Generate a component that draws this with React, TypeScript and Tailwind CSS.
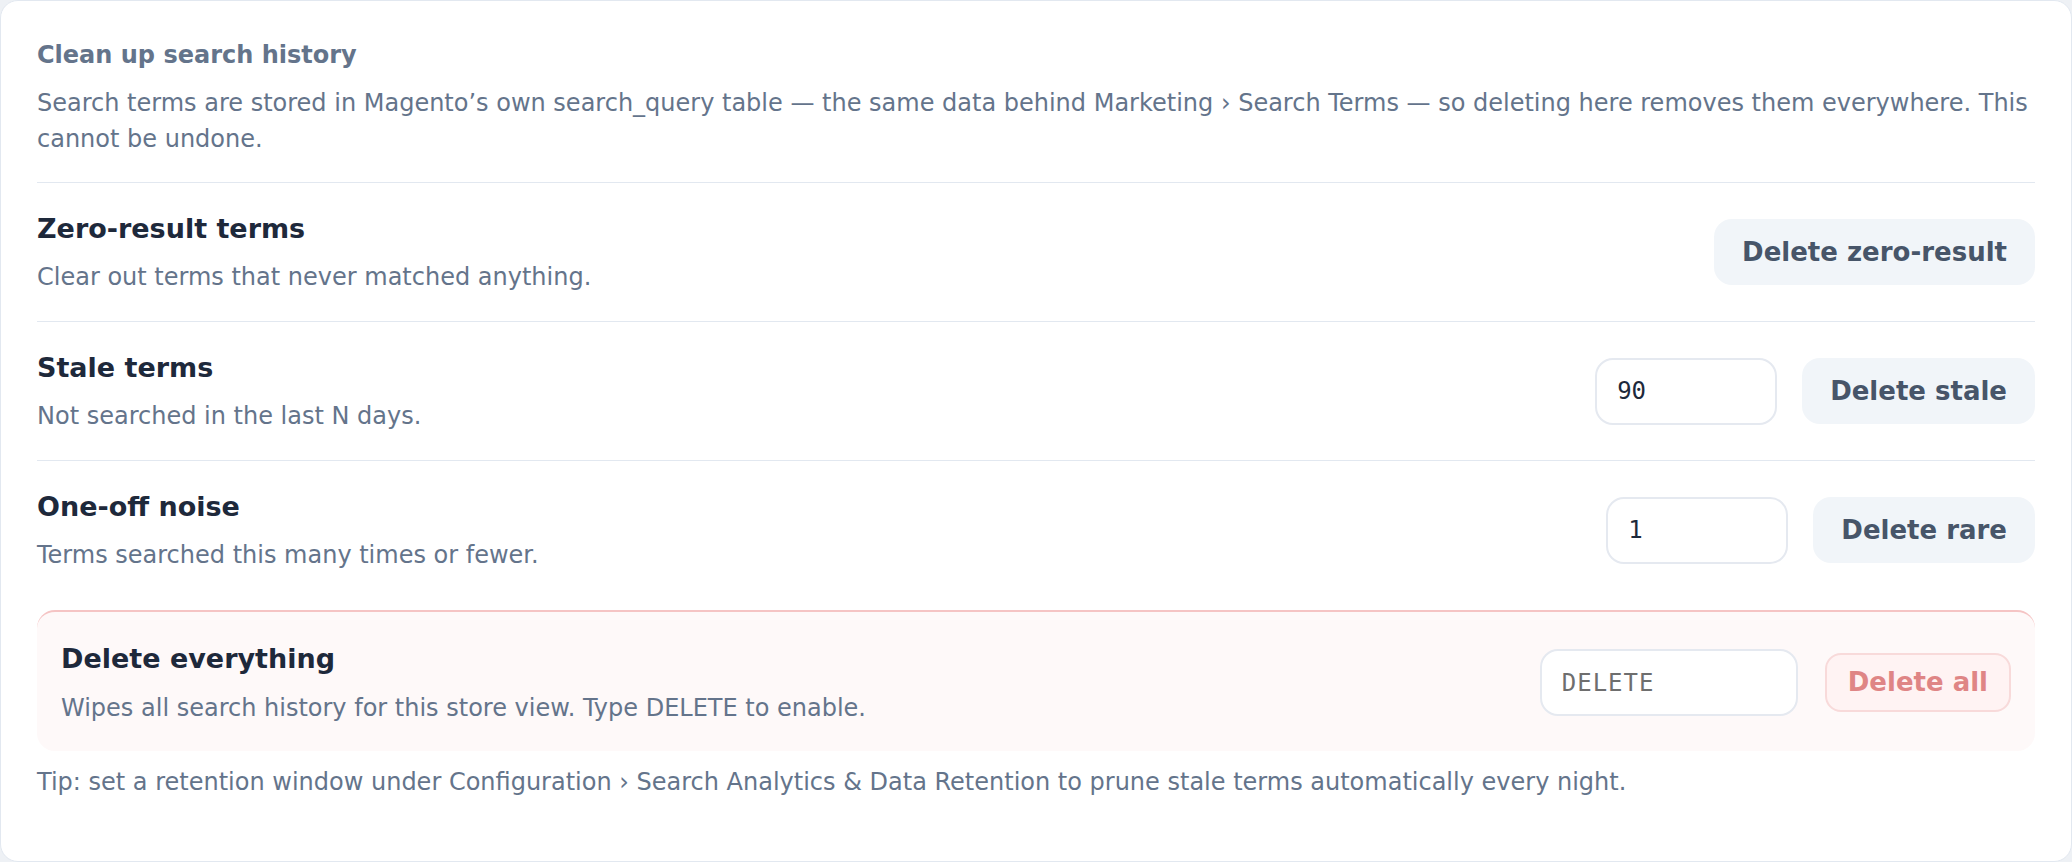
const rows = [
  {
    title: "Zero-result terms",
    desc: "Clear out terms that never matched anything.",
    button: "Delete zero-result",
    input: null as string | null,
  },
  {
    title: "Stale terms",
    desc: "Not searched in the last N days.",
    button: "Delete stale",
    input: "90",
  },
  {
    title: "One-off noise",
    desc: "Terms searched this many times or fewer.",
    button: "Delete rare",
    input: "1",
  },
]

export default function App() {
  return (
    <div className="min-h-screen bg-[#eef1f5]" style={{ fontFamily: '"DejaVu Sans", sans-serif' }}>
      <div className="min-h-screen rounded-[18px] border border-[#e2e8f0] bg-white px-[36px] pt-[36px]">
        {/* header */}
        <div className="pb-[25px]">
          <h2 className="text-[24px] leading-[36px] font-bold text-[#64748b]">Clean up search history</h2>
          <p className="mt-[12px] text-[24px] leading-[36px] text-[#64748b]">
            Search terms are stored in Magento’s own search_query table — the same data behind Marketing › Search
            Terms — so deleting here removes them everywhere. This cannot be undone.
          </p>
        </div>

        {rows.map((r, i) => (
          <div key={i} className="flex items-center justify-between gap-[24px] border-t border-[#e2e8f0] py-[26px]">
            <div>
              <h3 className="text-[27px] leading-[40px] font-bold text-[#1e293b]">{r.title}</h3>
              <p className="mt-[10px] text-[24px] leading-[36px] text-[#64748b]">{r.desc}</p>
            </div>
            <div className="flex items-center gap-[25px]">
              {r.input !== null && (
                <input
                  defaultValue={r.input}
                  className="h-[67px] w-[182px] rounded-[18px] border-2 border-[#e5e9f0] bg-white px-[20px] text-[24px] font-medium text-[#1e293b] outline-none"
                  style={{ fontFamily: '"DejaVu Sans Mono", monospace' }}
                />
              )}
              <button className="h-[66px] rounded-[18px] bg-[#f1f5f9] px-[28px] text-[26px] font-bold text-[#475569]">
                {r.button}
              </button>
            </div>
          </div>
        ))}

        {/* danger zone */}
        <div className="mt-[11px] flex items-center justify-between rounded-[18px] border-t-2 border-[#f5c4c4] bg-[#fef9f9] px-[24px] pt-[27px] pb-[25px]">
          <div>
            <h3 className="text-[27px] leading-[40px] font-bold text-[#1e293b]">Delete everything</h3>
            <p className="mt-[11px] text-[24px] leading-[36px] text-[#64748b]">
              Wipes all search history for this store view. Type DELETE to enable.
            </p>
          </div>
          <div className="flex items-center gap-[27px]">
            <input
              placeholder="DELETE"
              className="h-[67px] w-[258px] rounded-[18px] border-2 border-[#e5e9f0] bg-white px-[20px] text-[24px] tracking-[1px] text-[#1e293b] outline-none placeholder:text-[#6e6e6e]"
              style={{ fontFamily: '"DejaVu Sans Mono", monospace' }}
            />
            <button
              disabled
              className="h-[59px] rounded-[16px] border-2 border-[#f8dada] bg-[#fff3f3] px-[21px] text-[26px] font-bold text-[#df8585]"
            >
              Delete all
            </button>
          </div>
        </div>

        <p className="mt-[13px] text-[24px] leading-[36px] text-[#64748b]">
          Tip: set a retention window under Configuration › Search Analytics &amp; Data Retention to prune stale terms
          automatically every night.
        </p>
      </div>
    </div>
  )
}
